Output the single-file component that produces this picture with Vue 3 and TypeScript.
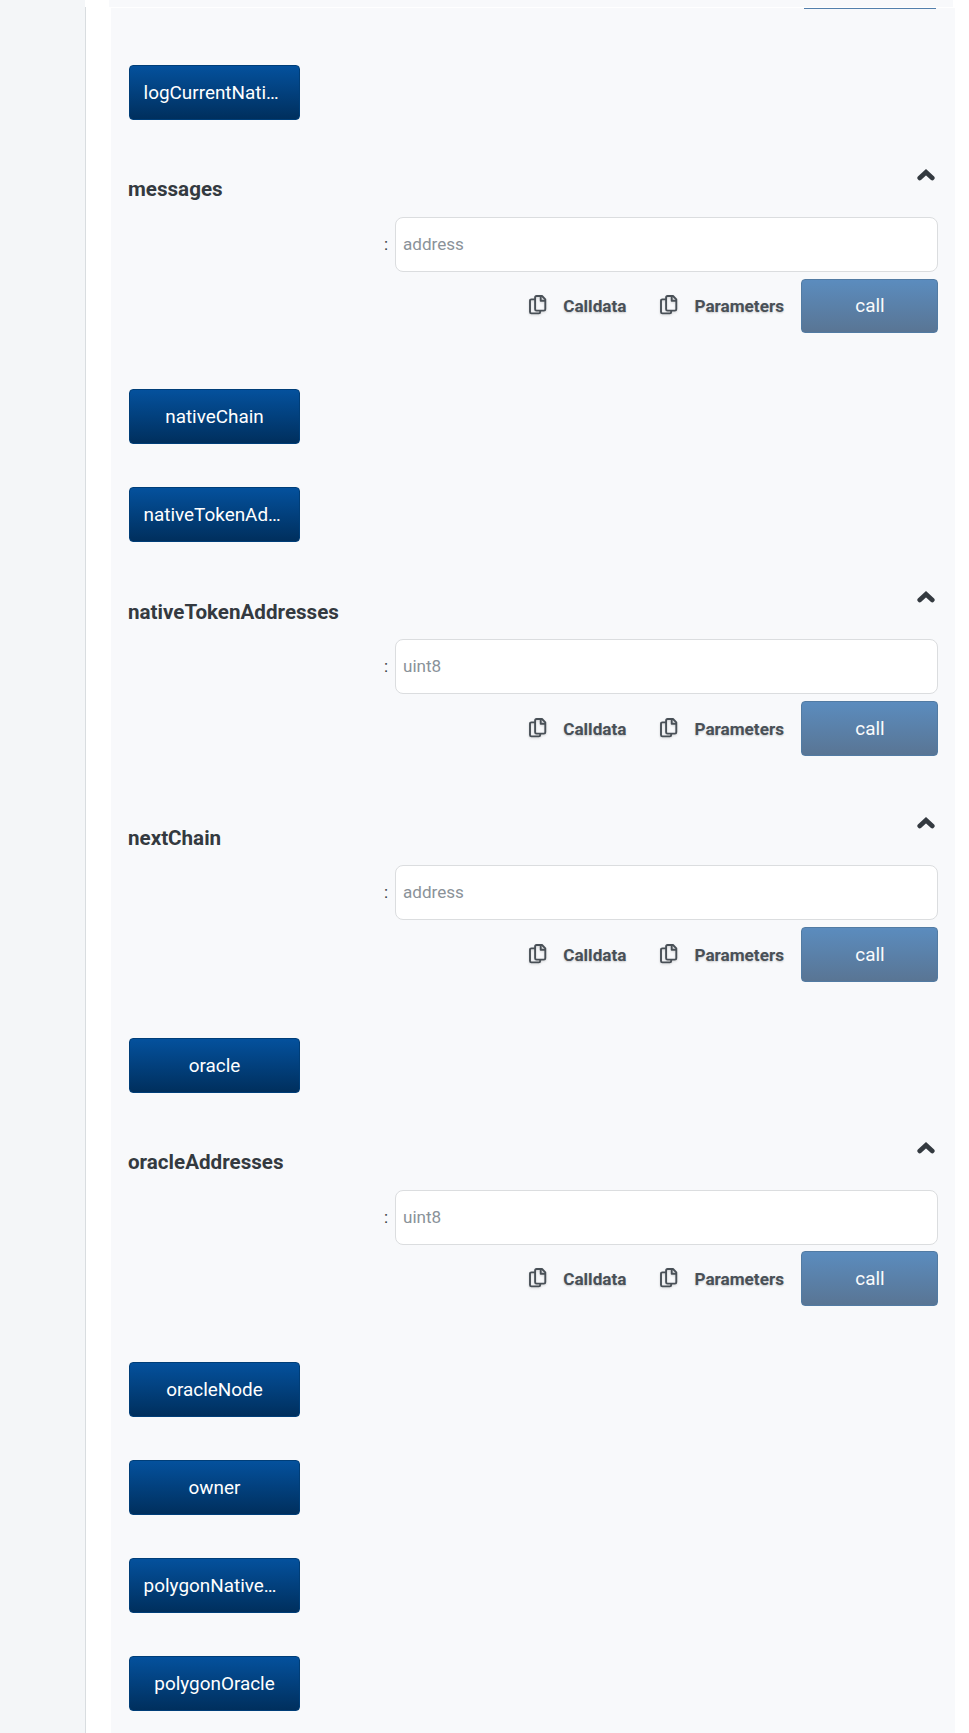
<script setup lang="ts">
interface ContractFunction {
  name: string
  placeholder?: string
}

const functions: ContractFunction[] = [
  { name: 'logCurrentNati…' },
  { name: 'messages', placeholder: 'address' },
  { name: 'nativeChain' },
  { name: 'nativeTokenAd…' },
  { name: 'nativeTokenAddresses', placeholder: 'uint8' },
  { name: 'nextChain', placeholder: 'address' },
  { name: 'oracle' },
  { name: 'oracleAddresses', placeholder: 'uint8' },
  { name: 'oracleNode' },
  { name: 'owner' },
  { name: 'polygonNative…' },
  { name: 'polygonOracle' },
]
const copyActions: string[] = ['Calldata', 'Parameters']
const isTruncated = (name: string): boolean => name.endsWith('…')
</script>

<template>
  <div class="page">
    <aside class="rail"><div class="rail-edge"></div></aside>
    <main class="content">
      <div class="previous"></div>
      <section class="panel">
        <div class="clipped"></div>
        <template v-for="fn in functions" :key="fn.name">
          <div v-if="fn.placeholder" class="multi">
            <header class="head">
              <span class="title">{{ fn.name }}</span>
              <svg class="chevron" width="18" height="12" viewBox="0 0 18 12">
                <path d="M2.7 9 9 3.2 15.3 9" />
              </svg>
            </header>
            <div class="field">
              <label class="colon">:</label>
              <input class="input" type="text" :placeholder="fn.placeholder" />
            </div>
            <div class="actions">
              <button v-for="action in copyActions" :key="action" class="copy" type="button">
                <svg class="copy-icon" width="18" height="20" viewBox="0 0 18 20">
                  <path d="M7.5 1H13L16.3 4.4V14.2Q16.3 15.6 14.9 15.6H7.5Q6.1 15.6 6.1 14.2V2.4Q6.1 1 7.5 1Z" />
                  <path d="M11.7 1.2V5.7H16.1" />
                  <path d="M6.1 4.4H2.4Q1 4.4 1 5.8V17Q1 18.4 2.4 18.4H9.8Q11.2 18.4 11.2 17V15.8" />
                </svg>
                <span>{{ action }}</span>
              </button>
              <button class="call" type="button">call</button>
            </div>
          </div>
          <div v-else class="single">
            <button class="getter" :class="{ truncated: isTruncated(fn.name) }" type="button">{{ fn.name }}</button>
          </div>
        </template>
      </section>
    </main>
  </div>
</template>

<style>
body {
  margin: 0;
  background: #fff;
}
</style>

<style scoped>
.page {
  display: flex;
  width: 969px;
  height: 1733px;
  overflow: hidden;
  background: #fff;
  font-family: Roboto, sans-serif;
  color: #343a40;
}
* {
  box-sizing: border-box;
}
.rail {
  width: 86px;
  flex: none;
  padding-top: 7px;
  background: linear-gradient(to right, #f4f6f8 85px, #fff 85px);
}
.rail-edge {
  height: 1726px;
  border-right: 1px solid #d9dde0;
}
.content {
  width: 883px;
}
.previous {
  width: 844px;
  height: 7px;
  margin: 0 0 1px 23px;
  background: #f8f9fb;
}
.panel {
  width: 844px;
  height: 1725px;
  margin-left: 25px;
  padding: 0 17px 0 18px;
  background: #f8f9fb;
}
.clipped {
  width: 132px;
  height: 1px;
  margin: 0 2px 55.9px auto;
  background: #527fac;
}
button {
  font-family: inherit;
  margin: 0;
}
.single {
  height: 97.9px;
}
.getter {
  display: block;
  width: 171px;
  height: 55px;
  padding: 0 13px;
  border: 1px solid #003e78;
  border-radius: 4px;
  background: linear-gradient(#04519d, #002f5d);
  color: #fff;
  font-size: 18.9px;
  line-height: 53px;
  text-align: center;
  white-space: nowrap;
}
.getter.truncated {
  padding-left: 13.6px;
  text-align: left;
}
.multi {
  height: 226.35px;
}
.head {
  display: flex;
  justify-content: space-between;
  height: 54.1px;
  padding: 5.65px 3px 0 0;
}
.title {
  margin-left: -1px;
  font-size: 20.6px;
  font-weight: 700;
  line-height: 42px;
}
.chevron {
  margin-top: 0.6px;
  fill: none;
  stroke: #343a40;
  stroke-width: 4.6;
  stroke-linecap: round;
  stroke-linejoin: miter;
}
.field {
  display: flex;
  align-items: center;
  justify-content: flex-end;
  height: 55px;
}
.colon {
  width: 11px;
  padding-bottom: 0.8px;
  font-size: 17px;
}
.input {
  width: 543px;
  height: 55px;
  padding: 0 7px 1px;
  border: 1px solid #dbdddf;
  border-radius: 8px;
  background: #fff;
  font: 17.1px Roboto, sans-serif;
}
.input::placeholder {
  color: #8a9299;
  opacity: 1;
}
.actions {
  display: flex;
  justify-content: flex-end;
  align-items: center;
  height: 54.8px;
  margin-top: 6.8px;
}
.copy {
  display: flex;
  align-items: center;
  gap: 16px;
  margin-right: 34px;
  padding: 0.8px 0 0;
  border: 0;
  background: none;
  color: #495057;
  font-size: 17.15px;
  font-weight: 700;
  text-shadow: 0 1px 2px rgba(0, 0, 0, 0.2);
}
.copy:nth-of-type(2) {
  margin-right: 17px;
}
.copy-icon {
  margin-bottom: 2px;
  fill: none;
  stroke: #495057;
  stroke-width: 1.9;
  stroke-linejoin: round;
  filter: drop-shadow(0 1px 1px rgba(0, 0, 0, 0.15));
}
.call {
  width: 137px;
  height: 54.8px;
  padding: 0 0 0.2px 1px;
  border: 1px solid #527ba3;
  border-radius: 4px;
  background: linear-gradient(#5b8cbe, #597594);
  color: #fafbfc;
  font-size: 18.9px;
}
</style>
